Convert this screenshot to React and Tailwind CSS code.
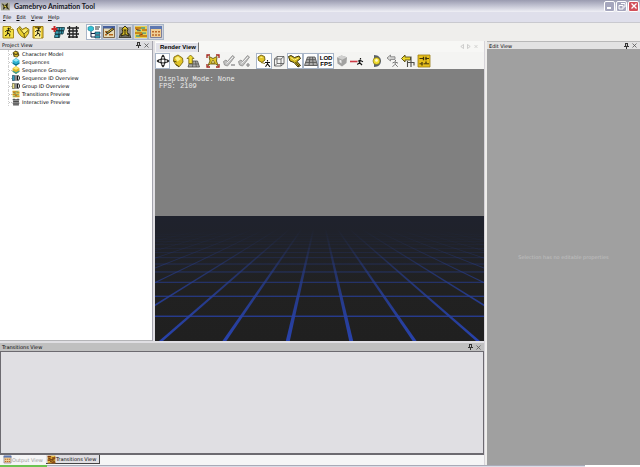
import React from "react";

function Icon({ children, size = "h-[14px] w-[14px]" }) {
  return (
    <svg viewBox="0 0 14 14" className={"block shrink-0 " + size} aria-hidden="true">
      {children}
    </svg>
  );
}

const Runner = ({ stroke = "#1c1a08" }) => (
  <g stroke={stroke} strokeWidth="1" fill="none">
    <circle cx="7.6" cy="3.8" r="0.7" fill={stroke} />
    <path d="M4.3 7 L5.6 5.4 L8.2 5.6 L9.8 7 M7 5.5 L6.6 8 L8.8 9.2 L8.6 11.4 M6.6 8 L6 9.8 L4 10.8" />
  </g>
);

const icons = {
  newFile: (
    <>
      <path d="M2 1.5h7.5l3 3v8.5H2z" fill="#f3df45" stroke="#a98d1c" />
      <path d="M9.5 1.5v3h3" fill="#fff7b0" stroke="#a98d1c" />
      <Runner />
    </>
  ),
  open: (
    <>
      <path d="M1 4 L4 1.5 L6 4.5 L10 2.5 L13 4.5 L12.5 8.5 L9 13 L5.5 11.5 L2.5 8z" fill="#ecd22f" stroke="#8a7418" />
      <path d="M6 5.5 L10 4 L11.5 6 L8.5 10z" fill="#fbf07b" />
      <path d="M3.5 3.5 L8 9 M8.5 12.5 L8 9 L12 5.5" stroke="#685610" fill="none" />
    </>
  ),
  save: (
    <>
      <path d="M2 1.5h10v11.5H2z" fill="#f0cf3c" stroke="#9b7c12" />
      <path d="M4 1.5h6v1.5H4z" fill="#77621a" />
      <path d="M4 4h6v9H4z" fill="#faf0a0" />
      <Runner />
    </>
  ),
  gridRed: (
    <>
      <path d="M5.5 2.5h8l-.5 3h-8z M4.5 6h8l-.5 3h-8z M4 9.5h5l-.5 3h-5z" fill="#3fa3b8" stroke="#0d3038" strokeWidth=".8" />
      <path d="M8.5 2.5l-1 10 M11 2.5l-.7 6.5" stroke="#0d3038" strokeWidth=".8" />
      <path d="M.5 4h6 M3.5 1v6" stroke="#c92626" strokeWidth="2" />
    </>
  ),
  gridBlack: (
    <path d="M1 3h12 M2 6h10 M1 9h12 M2 12h10 M3.5 1v12 M7 3v10 M10.5 1v12" stroke="#222" strokeWidth="1.3" fill="none" />
  ),
  tree: (
    <>
      <path d="M1 2.2 L4 1 L6.5 2.2 V5 L4 6.4 L1 5z" fill="#32c1d6" stroke="#14788a" strokeWidth=".6" />
      <path d="M4 6.5V12h4 M4 8.5h4" stroke="#124" fill="none" />
      <path d="M8 2h5 M8 4h4" stroke="#333" strokeWidth="1.2" />
      <path d="M8 7h5v2.4H8z M8 10.6h5V13H8z" fill="#32a7b8" stroke="#124" strokeWidth=".6" />
    </>
  ),
  form: (
    <>
      <path d="M1.5 1.5h11v11h-11z" fill="#e7dcb5" stroke="#7f6a4c" />
      <path d="M1 1h12v2.5H1z" fill="#46609c" />
      <path d="M3 6h2v1.5H3z M3 9h2v1.5H3z M7 9h4v1.5H7z" fill="#b4651b" />
      <path d="M4.5 8.5 L11.5 3.5" stroke="#2a2212" strokeWidth="2.2" />
      <path d="M5.5 7.6 L11 3.8" stroke="#e8c533" strokeWidth="1" />
    </>
  ),
  character: (
    <>
      <path d="M1 2h12v11H1z" fill="#92918b" />
      <path d="M1 12.5 L3 8.5h8l2 4z" fill="#6d6c60" stroke="#37372e" strokeWidth=".8" />
      <path d="M7 1 L10 4 L9 7 L11 11 L7.5 9.5 L3 11 L5 7 L4 4z" fill="#dcc22c" stroke="#262109" strokeWidth=".9" />
      <path d="M5.5 5h3 M7 5v4" stroke="#262109" />
    </>
  ),
  transitions: (
    <>
      <path d="M1 1h12v12H1z" fill="#e7cf55" />
      <path d="M1 3h6 M8 5h5 M1 8h7 M6 11h7" stroke="#c98718" strokeWidth="1.8" />
      <path d="M7 3h4 M3 5.5h4 M8 8.2h4 M2 11h4" stroke="#4b9a82" strokeWidth="1.3" />
      <path d="M2 4.3l4 1 M9 9l-4 1.2" stroke="#8a3b12" />
    </>
  ),
  transitionsDark: (
    <>
      <path d="M1 1h12v12H1z" fill="#cf9a2c" />
      <path d="M1 2.5h5 M8 4.5h5 M1 8h5 M7 12h6" stroke="#7c3410" strokeWidth="1.8" />
      <path d="M2 5l5 2 5-1 M4 11l4-2 4 1" stroke="#4a1c08" strokeWidth="1.3" fill="none" />
      <path d="M7 2.5h4 M2 10.5h3" stroke="#f3dc62" strokeWidth="1.3" />
    </>
  ),
  output: (
    <>
      <path d="M1.5 1.5h11v11h-11z" fill="#f0cf96" stroke="#7d7f9a" />
      <path d="M1 1h12v3H1z" fill="#5e78b0" />
      <path d="M3 6h2v1.5H3z M6 6h2v1.5H6z M9 6h2v1.5H9z M3 9.3h2v1.5H3z M6 9.3h2v1.5H6z M9 9.3h2v1.5H9z" fill="#bb6a2c" />
    </>
  ),
  move: (
    <g stroke="#151515" fill="none">
      <ellipse cx="7" cy="7" rx="4.6" ry="2" />
      <ellipse cx="7" cy="7" rx="2" ry="4.6" />
      <path d="M7 .5l2 2.2H5z M7 13.5l2-2.2H5z M.5 7l2.2-2v4z M13.5 7l-2.2-2v4z" fill="#151515" stroke="none" />
    </g>
  ),
  pan: (
    <>
      <path d="M3 3 L7 1 L11.5 4 L12 8 L8.5 12.5 L5 11 L2.5 7z" fill="#e3c526" stroke="#806b12" strokeWidth=".9" />
      <path d="M4 4 L7 2.5 L10 5 L6.5 7.5z" fill="#fbf08a" />
      <path d="M5 10.5l3 2.5 M2.5 7l3 1" stroke="#4f430c" />
    </>
  ),
  zoomFloor: (
    <>
      <path d="M4 7h7.5l2 6H2z" fill="#a8a8a5" stroke="#4e4e4b" strokeWidth=".8" />
      <path d="M3.5 10h9 M7 7l-.5 6 M9.5 7l.8 6" stroke="#4e4e4b" strokeWidth=".7" />
      <path d="M4.5 1 L8 4.5H6.3V9.5H2.8V4.5H1z" fill="#f2dc33" stroke="#71600f" strokeWidth=".8" />
    </>
  ),
  frame: (
    <>
      <path d="M1 4V1h3 M10 1h3v3 M1 10v3h3 M10 13h3v-3" stroke="#a3241b" strokeWidth="1.3" fill="none" />
      <path d="M3 2.5 L7 4.5 L11 2.5 L10.5 7 L12 11.5 L9.5 10 H4.5 L2 11.5 L4 7z" fill="#e3c92a" stroke="#675711" strokeWidth=".9" />
      <path d="M5 9L7 6l2 3z" fill="#fff6a8" stroke="#675711" strokeWidth=".7" />
    </>
  ),
  keyMinus: (
    <>
      <path d="M1.5 7.5 L4 6 L5.5 7.5 L10.5 1.5 L12.5 3 L8.5 8.5 L5.5 12 L2.5 11z" fill="#c0c0bf" stroke="#929291" strokeWidth=".9" />
      <path d="M4.5 9.5 L11 3" stroke="#efefef" />
      <path d="M9 11h4" stroke="#888" strokeWidth="1.3" />
    </>
  ),
  keyPlus: (
    <>
      <path d="M1.5 7.5 L4 6 L5.5 7.5 L10.5 1.5 L12.5 3 L8.5 8.5 L5.5 12 L2.5 11z" fill="#c0c0bf" stroke="#929291" strokeWidth=".9" />
      <path d="M4.5 9.5 L11 3" stroke="#efefef" />
      <path d="M9 11h4 M11 9v4" stroke="#888" strokeWidth="1.2" />
    </>
  ),
  camera: (
    <>
      <path d="M1 3 L4 1 L7.5 2.5 L8 6 L5 8.5 L1.5 6.5z" fill="#e0c42a" stroke="#6d5c10" strokeWidth=".9" />
      <path d="M2.5 3.5 L4.5 2.5 L6 4z" fill="#fff5a0" />
      <path d="M4 8.5 L8 9.5" stroke="#8a7720" />
      <path d="M10.5 6v1.6 M8 8.5h5 M10.5 8v2 M8.5 12.8l2-3 2.5 3" stroke="#111" strokeWidth="1.1" fill="none" />
    </>
  ),
  cube: (
    <path d="M2.5 5h6.5v7H2.5z M5 2.5h7v7H5z M2.5 5L5 2.5 M9 5l3-2.5 M9 12l3-2.5 M2.5 12L5 9.5" stroke="#555" strokeWidth=".8" fill="none" />
  ),
  flashlight: (
    <>
      <path d="M.5 2.5 L3 1.5 L6.5 3.5 L11 2 L12.5 4.5 L9 7.5 L12.5 11.5 L10 13 L6 8.5 L2 7z" fill="#d1b81f" stroke="#38310a" />
      <path d="M2.5 3.5l4 2.5 L10.5 4" stroke="#fff188" fill="none" />
      <path d="M7.5 8l3.5 4" stroke="#38310a" />
    </>
  ),
  floor: (
    <>
      <path d="M3.5 3h7.5l2.5 8.5H.5z" fill="#adadac" stroke="#555" strokeWidth=".9" />
      <path d="M2.7 5.7h8.9 M1.8 8.4h10.6 M6 3l-1 8.5 M8.5 3l.8 8.5" stroke="#555" strokeWidth=".9" />
    </>
  ),
  cubeSolid: (
    <>
      <path d="M2 3.5 L6.5 1.5 L12 3.2 L11.5 9 L7 12.5 L2.5 9.5z" fill="#a2a2a1" />
      <path d="M2 3.5 L6.5 1.5 L12 3.2 L7.2 5.8z" fill="#d0d0cf" />
      <path d="M4.5 5.5l2 1v3l-2-1.5z" fill="#eee" />
    </>
  ),
  runRed: (
    <>
      <path d="M0 7.5h7.5" stroke="#cc3a45" strokeWidth="1.6" />
      <path d="M8 7.2l2-.9 3 1.4 M10.5 4v1.6 M10.2 6l-.8 3-2.2 1.5 M9.5 8.5l2.5 2.5" stroke="#151515" strokeWidth="1.2" fill="none" />
    </>
  ),
  lightHalf: (
    <>
      <path d="M4 1 C8.5 1 11 4 11 7 C11 10 8.5 13 4 13z" fill="#59616c" />
      <circle cx="6.5" cy="7" r="3.5" fill="#f0dc30" stroke="#746712" strokeWidth=".6" />
      <circle cx="6.5" cy="6.4" r="1.4" fill="#fffbd0" />
    </>
  ),
  backGray: (
    <>
      <path d="M1 4 L4.5 1 V2.8H9v2.6H4.5V7z" fill="#d8d8d7" stroke="#777" strokeWidth=".8" />
      <path d="M9.5 6v1.3 M6.5 9l2.5-1.2 3 1.4 M9.2 8v2.2l2.6 2.6 M9 10.3l-2.5 2.5" stroke="#777" strokeWidth="1" fill="none" />
    </>
  ),
  backYellow: (
    <>
      <path d="M.5 4.5 L4 1 V3H9.5v3H4V8z" fill="#ecd62b" stroke="#54490f" strokeWidth=".9" />
      <path d="M6.5 7v6 M10 2.5v10.5 M6.5 8.5h6.5v3" stroke="#4d4d48" strokeWidth="1.1" fill="none" />
    </>
  ),
  mixer: (
    <>
      <path d="M1 1h12v12H1z" fill="#e8c01d" stroke="#9b7c13" strokeWidth=".8" />
      <path d="M2.5 4.5h4 M8.5 4.5h3.5 M2.5 9.8h2 M6.5 9.8h5.5" stroke="#40330a" />
      <path d="M6.5 2.8v3.4 M9 2.8v3.4 M5 8v3.4 M9 7.5v2" stroke="#40330a" strokeWidth="1.3" />
    </>
  ),
  sphereBlue: (
    <>
      <path d="M1 4 L7 0 L13 4 V10 L7 14 L1 10z" fill="#2eb3d2" />
      <path d="M2 4 L7 1 L12 4 L7 6.5z" fill="#97e7f3" />
      <path d="M1 9.5 L7 13.5 L13 9.5V8L7 11 1 8z" fill="#147089" />
    </>
  ),
  sphereGold: (
    <>
      <path d="M1 4 L7 0 L13 4 V10 L7 14 L1 10z" fill="#dcb62a" />
      <path d="M2 4 L7 1 L12 4 L7 6.5z" fill="#fbec78" />
      <path d="M1 8 L7 11 L13 8V10L7 14 1 10z" fill="#3b9a94" />
    </>
  ),
  idBlue: (
    <>
      <path d="M.5 2.5h4v9h-4z" fill="#2fa1b8" stroke="#124" />
      <path d="M7 2v10 M9.6 3h1.2q2.2 0 2.2 4t-2.2 4H9.6z" stroke="#111" strokeWidth="1.7" fill="none" />
    </>
  ),
  idGold: (
    <>
      <path d="M.5 2.5h4v9h-4z" fill="#eee38a" stroke="#332" />
      <path d="M7 2v10 M9.6 3h1.2q2.2 0 2.2 4t-2.2 4H9.6z" stroke="#111" strokeWidth="1.7" fill="none" />
    </>
  ),
  model: (
    <>
      <path d="M1 5 L6 1 L11 3 L13 9 L9 13 L3 12z" fill="#5c4f1c" />
      <path d="M3 5l3-2 4 2-3 2z M4 8l3 1 4-1-2 4-4-1z" fill="#e5c62e" />
    </>
  ),
};

function ToolButton({ name, label, pressed, shade }) {
  const look = pressed
    ? "border-[#a9b6c8] " + (shade ? "bg-[#cfd3dc]" : "bg-white")
    : "border-transparent";
  return (
    <button
      type="button"
      aria-label={label}
      aria-pressed={pressed ? true : undefined}
      className={"flex h-4 min-w-0 flex-1 items-center justify-center border " + look}
    >
      {name === "lod" ? (
        <span className="text-center font-['Liberation_Sans',sans-serif] text-[6px] leading-[6px] font-bold text-black">
          LOD
          <br />
          FPS
        </span>
      ) : (
        <Icon>{icons[name]}</Icon>
      )}
    </button>
  );
}

function PinClose() {
  return (
    <div className="ml-auto flex items-center gap-[3px]">
      <button type="button" aria-label="Pin" className="flex">
        <svg viewBox="0 0 5 6" className="h-[6px] w-[5px]">
          <path d="M1 0h3v3h1v1H3v2H2V4H0V3h1z" fill="#333" />
          <path d="M2 1h.8v2H2z" fill="#eee" />
        </svg>
      </button>
      <button type="button" aria-label="Close" className="flex">
        <svg viewBox="0 0 5 5" className="h-[5px] w-[5px]">
          <path d="M.5 .5l4 4 M4.5 .5l-4 4" stroke="#555" strokeWidth=".8" />
        </svg>
      </button>
    </div>
  );
}

function PanelHeader({ title, tone }) {
  return (
    <div className={"flex h-2 shrink-0 items-center pr-[3px] pl-[2px] " + tone}>
      <h2 className="text-[5px] leading-[8px] text-black">{title}</h2>
      <PinClose />
    </div>
  );
}

const treeItems = [
  ["model", "Character Model"],
  ["sphereBlue", "Sequences"],
  ["sphereGold", "Sequence Groups"],
  ["idBlue", "Sequence ID Overview"],
  ["idGold", "Group ID Overview"],
  ["transitions", "Transitions Preview"],
  ["gridBlack", "Interactive Preview"],
];

function ProjectView() {
  return (
    <section className="flex w-[153px] shrink-0 flex-col border-r border-[#a5a5ae]">
      <PanelHeader title="Project View" tone="bg-[#dcdce0]" />
      <ul className="flex-1 border-t border-b border-[#b5b5b8] bg-white pl-2">
        {treeItems.map(([icon, label]) => (
          <li key={label} className="flex h-2 items-center border-l border-dotted border-[#cfcfcf]">
            <span className="w-[3px] border-t border-dotted border-[#c0c0c0]" />
            <Icon size="h-2 w-2">{icons[icon]}</Icon>
            <span className="ml-[2px] text-[5px] leading-[8px] whitespace-nowrap text-black">{label}</span>
          </li>
        ))}
      </ul>
    </section>
  );
}

const vanish = { x: 165, y: -13 };
const columns = [-11, -10, -9, -8, -7, -6, -5, -4, -3, -2, -1, 0, 1, 2, 3, 4, 5, 6, 7, 8, 9, 10];
const rows = [0, 1, 2, 3, 4, 5, 6, 7, 8, 9, 10, 11, 12, 13];

function FloorGrid() {
  return (
    <svg viewBox="0 0 330 125" preserveAspectRatio="none" className="block h-[125px] w-full" role="img" aria-label="Floor grid">
      <defs>
        <linearGradient id="ground" x1="0" y1="0" x2="0" y2="1">
          <stop offset="0" stopColor="#1f222d" />
          <stop offset="0.3" stopColor="#202228" />
          <stop offset="0.6" stopColor="#212121" />
          <stop offset="1" stopColor="#202020" />
        </linearGradient>
        <linearGradient id="beam" gradientUnits="userSpaceOnUse" x1="0" y1="0" x2="0" y2="125">
          <stop offset="0.1" stopColor="#24397d" stopOpacity="0" />
          <stop offset="0.25" stopColor="#273b88" stopOpacity="0.22" />
          <stop offset="0.45" stopColor="#273d90" stopOpacity="0.6" />
          <stop offset="0.65" stopColor="#273f9c" stopOpacity="0.85" />
          <stop offset="1" stopColor="#2842ac" stopOpacity="1" />
        </linearGradient>
      </defs>
      <rect width="330" height="125" fill="url(#ground)" />
      <g fill="url(#beam)">
        {columns.map((n) => {
          const x = vanish.x + 31.8 + n * 63.6;
          return <polygon key={n} points={`${vanish.x - 0.5},${vanish.y} ${vanish.x + 0.5},${vanish.y} ${x + 2},125 ${x - 2},125`} />;
        })}
        {rows.map((n) => {
          const depth = 1 / (0.00883 + n * 0.00189);
          const thick = Math.max(0.5, 1.3 - n * 0.1);
          return <rect key={n} x="0" width="330" y={vanish.y + depth - thick / 2} height={thick} />;
        })}
      </g>
    </svg>
  );
}

function RenderView() {
  return (
    <section className="flex min-w-0 flex-1 flex-col">
      <div role="tablist" className="flex h-[11px] shrink-0 items-end bg-[#f7f7f5] pl-[1px]">
        <button
          type="button"
          role="tab"
          aria-selected="true"
          className="h-[10px] border-t border-r border-t-white border-r-[#777] bg-[#e2e2ea] pr-[2px] pl-1 font-['Liberation_Sans',sans-serif] text-[6px] leading-[9px] font-bold whitespace-nowrap text-black"
        >
          Render View
        </button>
        <div className="ml-auto flex h-full items-center gap-[3px] pr-[6px]">
          <button type="button" aria-label="Previous" className="flex">
            <svg viewBox="0 0 4 5" className="h-[5px] w-1"><path d="M3.5 .5v4L.8 2.5z" fill="none" stroke="#bbb" strokeWidth=".7" /></svg>
          </button>
          <button type="button" aria-label="Next" className="flex">
            <svg viewBox="0 0 4 5" className="h-[5px] w-1"><path d="M.5 .5v4l2.7-2z" fill="none" stroke="#bbb" strokeWidth=".7" /></svg>
          </button>
          <button type="button" aria-label="Close view" className="flex">
            <svg viewBox="0 0 4 5" className="h-[5px] w-1"><path d="M.5 1l3 3 M3.5 1l-3 3" stroke="#c4c4c4" strokeWidth=".7" /></svg>
          </button>
        </div>
      </div>
      <div role="toolbar" className="flex h-[17px] shrink-0 items-center bg-[#f4f4f2]">
        <div className="flex w-[46px]">
          <ToolButton name="move" label="Orbit" pressed />
          <ToolButton name="pan" label="Pan" />
          <ToolButton name="zoomFloor" label="Walk" />
        </div>
        <div className="ml-1 flex w-[47px]">
          <ToolButton name="frame" label="Frame" />
          <ToolButton name="keyMinus" label="Slower" />
          <ToolButton name="keyPlus" label="Faster" />
        </div>
        <div className="ml-1 flex w-[109px]">
          <ToolButton name="camera" label="Follow" pressed />
          <ToolButton name="cube" label="Bounds" />
          <ToolButton name="flashlight" label="Headlight" pressed />
          <ToolButton name="floor" label="Floor" pressed />
          <ToolButton name="lod" label="LOD FPS" pressed />
          <ToolButton name="cubeSolid" label="Solid" />
          <ToolButton name="runRed" label="Root motion" />
        </div>
        <div className="ml-1 flex w-[63px]">
          <ToolButton name="lightHalf" label="Lighting" />
          <ToolButton name="backGray" label="Reset pose" />
          <ToolButton name="backYellow" label="Reset view" />
          <ToolButton name="mixer" label="Settings" />
        </div>
      </div>
      <div className="flex flex-1 flex-col bg-[#808080]">
        <div className="flex-1 px-1 pt-[7px] font-['Liberation_Mono',monospace] text-[7px] leading-[7px] text-[#ececec]">
          <p>Display Mode: None</p>
          <p>FPS: 2109</p>
        </div>
        <FloorGrid />
      </div>
    </section>
  );
}

function TransitionsView() {
  return (
    <section className="flex h-[122px] shrink-0 flex-col">
      <PanelHeader title="Transitions View" tone="bg-[#c0c0c0]" />
      <div className="flex-1 border border-b-2 border-[#6c6a70] bg-[#e0dfe3]" />
      <div role="tablist" className="flex h-[10px] shrink-0 items-start bg-[#f5f5f6] pl-[3px]">
        <button type="button" role="tab" aria-selected="false" className="flex h-[9px] w-[43px] items-center text-[5px] leading-[8px] whitespace-nowrap text-[#999]">
          <Icon size="h-[9px] w-[9px]">{icons.output}</Icon>
          Output View
        </button>
        <button type="button" role="tab" aria-selected="true" className="flex h-[9px] items-center border-r border-b border-[#444] bg-[#e0dfe3] pr-[3px] pl-[1px] text-[5px] leading-[8px] whitespace-nowrap text-black">
          <Icon size="h-[9px] w-[9px]">{icons.transitionsDark}</Icon>
          Transitions View
        </button>
      </div>
    </section>
  );
}

function TitleBar() {
  return (
    <header className="flex h-3 shrink-0 items-center bg-linear-to-b from-[#9a9bb0] via-[#c4c5d4] to-[#f0f0f6] pr-[1px] pl-[1px]">
      <Icon size="h-[9px] w-[9px]">
        <path d="M0 1h14v12H0z" fill="#aaa998" />
        <path d="M1 2l5 3 5-4-1 6 3 5-6-3-4 3 1-5z" fill="#26230f" />
        <path d="M4 5l3 1 2 3-3-1z" fill="#f0dc46" />
      </Icon>
      <h1 className="ml-1 font-['Lato',sans-serif] text-[7px] leading-[12px] font-bold text-[#15151c]">
        Gamebryo Animation Tool
      </h1>
      <div className="ml-auto flex gap-[1px]">
        <button type="button" aria-label="Minimize" className="flex h-[11px] w-[11px] items-end rounded-[2px] border border-white bg-[#a5a6bd] p-[2px]">
          <span className="h-[2px] w-1 bg-white" />
        </button>
        <button type="button" aria-label="Restore" className="flex h-[11px] w-[11px] items-center justify-center rounded-[2px] border border-white bg-[#a5a6bd]">
          <svg viewBox="0 0 8 8" className="h-2 w-2">
            <path d="M3 1.5h4v3.5H5.5 M1 3.5h4v3.5H1z" stroke="#fff" fill="none" />
          </svg>
        </button>
        <button type="button" aria-label="Close window" className="flex h-[11px] w-[11px] items-center justify-center rounded-[2px] border border-white bg-[#d2505a]">
          <svg viewBox="0 0 8 8" className="h-2 w-2">
            <path d="M1.5 1.5l5 5 M6.5 1.5l-5 5" stroke="#fff" strokeWidth="1.3" />
          </svg>
        </button>
      </div>
    </header>
  );
}

export default function App() {
  return (
    <div className="flex h-screen min-h-[360px] w-full flex-col overflow-hidden bg-[#efeeec] font-['DejaVu_Sans','Open_Sans',sans-serif]">
      <TitleBar />
      <nav className="flex h-[11px] shrink-0 items-center gap-[5px] border-b border-[#c9c9cf] bg-[#dfdfeb] pl-[3px] text-[5px] leading-[10px] text-black">
        {["File", "Edit", "View", "Help"].map((m) => (
          <button key={m} type="button">
            <span className="underline">{m[0]}</span>
            {m.slice(1)}
          </button>
        ))}
      </nav>
      <div role="toolbar" className="flex h-[18px] shrink-0 items-center">
        <div className="flex w-[46px]">
          <ToolButton name="newFile" label="New" />
          <ToolButton name="open" label="Open" />
          <ToolButton name="save" label="Save" />
        </div>
        <div className="ml-1 flex w-[31px]">
          <ToolButton name="gridRed" label="Add sequence" />
          <ToolButton name="gridBlack" label="Sequence grid" />
        </div>
        <div className="ml-[5px] flex w-[78px]">
          <ToolButton name="tree" label="Project view" pressed />
          <ToolButton name="form" label="Edit view" pressed shade />
          <ToolButton name="character" label="Render view" pressed shade />
          <ToolButton name="transitions" label="Transitions view" pressed shade />
          <ToolButton name="output" label="Output view" pressed shade />
        </div>
      </div>
      <main className="flex min-h-0 flex-1">
        <div className="flex min-w-0 flex-1 flex-col gap-[2px] border-r border-[#d6d3d8] bg-[#e0dfe3]">
          <div className="flex min-h-0 flex-1 gap-[2px]">
            <ProjectView />
            <RenderView />
          </div>
          <TransitionsView />
        </div>
        <aside className="ml-[2px] flex w-[153px] shrink-0 flex-col">
          <PanelHeader title="Edit View" tone="border-t border-[#b8b8b8] bg-[#e2e2e2]" />
          <div className="flex flex-1 items-center justify-center bg-[#a0a0a0]">
            <p className="text-[5px] leading-[8px] text-[#c0c0c0]">Selection has no editable properties</p>
          </div>
        </aside>
      </main>
      <footer className="flex h-[2px] shrink-0">
        <div className="w-[47px] bg-[#6cc452]" />
        <div className="flex-1 border-t border-[#a9abb8] bg-[#dcdde6]" />
        <div className="w-[55px] bg-white" />
      </footer>
    </div>
  );
}
